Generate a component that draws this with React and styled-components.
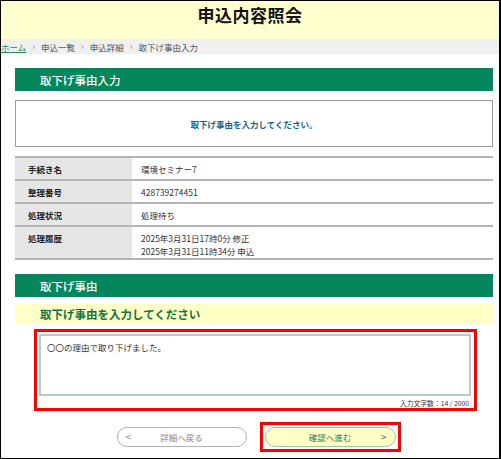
import React from "react";
import styled, { createGlobalStyle } from "styled-components";

const Global = createGlobalStyle`
  html, body { margin: 0; padding: 0; background: #fff; }
  body { font-family: "Noto Sans CJK JP", "Noto Sans", sans-serif; }
  * { box-sizing: border-box; }
`;

const Frame = styled.div`
  width: 501px;
  height: 459px;
  border: 1px solid #000;
  border-right-width: 2px;
  overflow: hidden;
  display: flex;
  flex-direction: column;
`;

const Header = styled.header`
  height: 38px;
  background: #ffffcf;
  display: flex;
  align-items: center;
  justify-content: center;
  padding-bottom: 11px;
  h1 {
    margin: 0;
    font-size: 17px;
    font-weight: 700;
    color: #111;
    letter-spacing: 0.5px;
  }
`;

const Crumbs = styled.nav`
  height: 15px;
  background: #f0f0f0;
  display: flex;
  align-items: center;
  gap: 6px;
  font-size: 8.5px;
  color: #555;
  padding-left: 0;
  a { color: #2d8a5a; text-decoration: underline; }
`;

const Sep = styled.span`
  color: #888;
  font-size: 9px;
`;

const Main = styled.main`
  padding: 14px 6px 0 14px;
  display: flex;
  flex-direction: column;
`;

const SectionBar = styled.h2`
  margin: ${(p) => p.$top || 0}px 0 0;
  height: 23px;
  background: #05865d;
  color: #fff;
  font-size: 11.5px;
  font-weight: 500;
  display: flex;
  align-items: center;
  padding-left: 25px;
`;

const InfoBox = styled.div`
  margin-top: 9px;
  height: 47px;
  border: 1px solid #9a9a9a;
  display: flex;
  align-items: center;
  justify-content: center;
  font-size: 8.5px;
  font-weight: 700;
  color: #1d5f8c;
`;

const Table = styled.div`
  margin-top: 9px;
  border-top: 2px solid #b4b4b4;
  display: flex;
  flex-direction: column;
  font-size: 8.5px;
  color: #333;
`;

const Row = styled.div`
  display: grid;
  grid-template-columns: 117px 1fr;
  border-bottom: 2px solid #b4b4b4;
  min-height: ${(p) => p.$h || 23}px;
`;

const Th = styled.div`
  background: #e6e6e6;
  font-weight: 700;
  padding: 5px 0 0 13px;
  color: #222;
`;

const Td = styled.div`
  padding: 5px 0 0 9px;
  line-height: 13px;
`;

const SubHead = styled.h3`
  margin: 7px 0 0;
  height: 20px;
  background: #ffffc6;
  color: #13733f;
  font-size: 11.5px;
  font-weight: 700;
  display: flex;
  align-items: center;
  padding-left: 25px;
`;

const Highlight = styled.div`
  margin: 5px 16px 0 19px;
  height: 82px;
  border: 3px solid #ff0000;
  padding: 2px 3px 0 2px;
  display: flex;
  flex-direction: column;
`;

const TextArea = styled.textarea`
  height: 63px;
  width: 100%;
  resize: none;
  border: 2px solid #b6cccb;
  padding: 5px 6px;
  font-family: inherit;
  font-size: 8.5px;
  color: #333;
  outline: none;
`;

const Counter = styled.div`
  text-align: right;
  font-size: 6.8px;
  color: #333;
  margin-top: 2px;
  padding-right: 2px;
`;

const ButtonRow = styled.div`
  margin-top: 11px;
  display: flex;
  justify-content: center;
  align-items: center;
  gap: 13px;
  padding-left: 9px;
`;

const RedFrame = styled.div`
  border: 3px solid #ff0000;
  padding: 2px;
  display: flex;
`;

const PillButton = styled.button`
  width: ${(p) => (p.$primary ? 131 : 130)}px;
  height: 20px;
  border-radius: 10px;
  border: 1px solid ${(p) => (p.$primary ? "#9cc79c" : "#b0b0b0")};
  background: ${(p) => (p.$primary ? "#ffffc6" : "#fff")};
  color: ${(p) => (p.$primary ? "#2c7a52" : "#888")};
  font-family: inherit;
  font-size: 8.5px;
  display: flex;
  align-items: center;
  justify-content: center;
  position: relative;
  padding: 0;
`;

const Arrow = styled.span`
  position: absolute;
  top: 50%;
  transform: translateY(-52%);
  font-size: 10px;
  ${(p) => (p.$side === "left" ? "left: 8px;" : "right: 8px;")}
`;

const rows = [
  { k: "手続き名", v: ["環境セミナー7"] },
  { k: "整理番号", v: ["428739274451"] },
  { k: "処理状況", v: ["処理待ち"] },
  { k: "処理履歴", v: ["2025年3月31日17時0分 修正", "2025年3月31日11時34分 申込"], h: 31 },
];

export default function App() {
  return (
    <>
      <Global />
      <Frame>
        <Header>
          <h1>申込内容照会</h1>
        </Header>
        <Crumbs>
          <a href="#">ホーム</a>
          <Sep>›</Sep>
          <span>申込一覧</span>
          <Sep>›</Sep>
          <span>申込詳細</span>
          <Sep>›</Sep>
          <span>取下げ事由入力</span>
        </Crumbs>
        <Main>
          <SectionBar>取下げ事由入力</SectionBar>
          <InfoBox>取下げ事由を入力してください。</InfoBox>
          <Table>
            {rows.map((r) => (
              <Row key={r.k} $h={r.h ? r.h + 2 : 23}>
                <Th>{r.k}</Th>
                <Td>
                  {r.v.map((line) => (
                    <div key={line}>{line}</div>
                  ))}
                </Td>
              </Row>
            ))}
          </Table>
          <SectionBar $top={14}>取下げ事由</SectionBar>
          <SubHead>取下げ事由を入力してください</SubHead>
          <Highlight>
            <TextArea defaultValue="〇〇の理由で取り下げました。" />
            <Counter>入力文字数：14 / 2000</Counter>
          </Highlight>
          <ButtonRow>
            <PillButton>
              <Arrow $side="left">&lt;</Arrow>
              詳細へ戻る
            </PillButton>
            <RedFrame>
              <PillButton $primary>
                確認へ進む
                <Arrow $side="right">&gt;</Arrow>
              </PillButton>
            </RedFrame>
          </ButtonRow>
        </Main>
      </Frame>
    </>
  );
}
